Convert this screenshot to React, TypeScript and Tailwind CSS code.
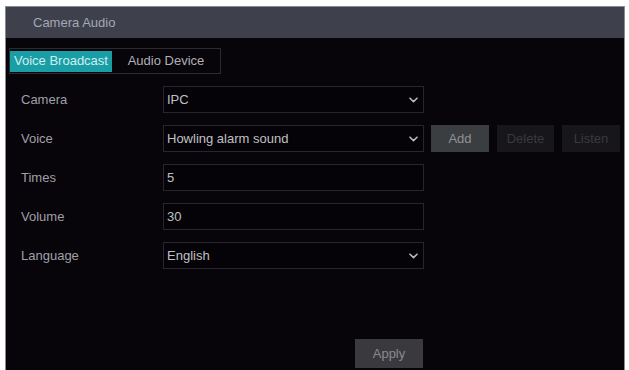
import React from "react";

const Chevron = () => (
  <svg width="9" height="6" viewBox="0 0 9 6" className="shrink-0">
    <polyline points="1,1.2 4.5,4.6 8,1.2" fill="none" stroke="#b8b8bc" strokeWidth="1.6" strokeLinecap="round" strokeLinejoin="round" />
  </svg>
);

const Field = ({ value, select }: { value: string; select?: boolean }) => (
  <div className="flex h-[27px] w-[261px] items-center justify-between border border-[#26262c] bg-[#050307] pl-[3px] pr-[5px] text-[#c0c0c4]">
    <span>{value}</span>
    {select && <Chevron />}
  </div>
);

const Row = ({ label, children }: { label: string; children: React.ReactNode }) => (
  <div className="flex items-center">
    <div className="w-[157px] pl-[15px] text-[#a0a0a6]">{label}</div>
    {children}
  </div>
);

export default function App() {
  return (
    <div
      className="h-[370px] w-[629px] overflow-hidden bg-white pl-[5px] pr-[4px] pt-[6px] text-[13px]"
      style={{ fontFamily: '"Liberation Sans", Arial, sans-serif' }}
    >
      <div className="flex h-full flex-col border-x border-t border-[#8a8a90] bg-[#07040a]">
        <div className="flex h-[31px] shrink-0 items-center bg-[#3e414c] pl-[27px] text-[#a4a8b4]">Camera Audio</div>
        <div className="flex flex-col pt-[10px]">
          <div className="ml-[3px] flex h-[26px] w-[212px] items-center border border-[#2a2a30]">
            <div className="flex h-[21px] w-[102px] items-center justify-center bg-[#1a9ea6] text-[#d0eef0]">Voice Broadcast</div>
            <div className="flex flex-1 items-center justify-center text-[#b0b0b6]">Audio Device</div>
          </div>
          <div className="mt-[12px] flex flex-col gap-[12px]">
            <Row label="Camera">
              <Field value="IPC" select />
            </Row>
            <Row label="Voice">
              <Field value="Howling alarm sound" select />
              <div className="ml-[7px] flex gap-[8px]">
                <div className="flex h-[27px] w-[58px] items-center justify-center bg-[#3a3e41] text-[#8e9296]">Add</div>
                <div className="flex h-[27px] w-[57px] items-center justify-center bg-[#17161a] text-[#3a3a3e]">Delete</div>
                <div className="flex h-[27px] w-[58px] items-center justify-center bg-[#17161a] text-[#3a3a3e]">Listen</div>
              </div>
            </Row>
            <Row label="Times">
              <Field value="5" />
            </Row>
            <Row label="Volume">
              <Field value="30" />
            </Row>
            <Row label="Language">
              <Field value="English" select />
            </Row>
          </div>
          <div className="ml-[349px] mt-[70px] flex h-[29px] w-[68px] items-center justify-center bg-[#3a3a3e] text-[#8a8a8e]">Apply</div>
        </div>
      </div>
    </div>
  );
}
